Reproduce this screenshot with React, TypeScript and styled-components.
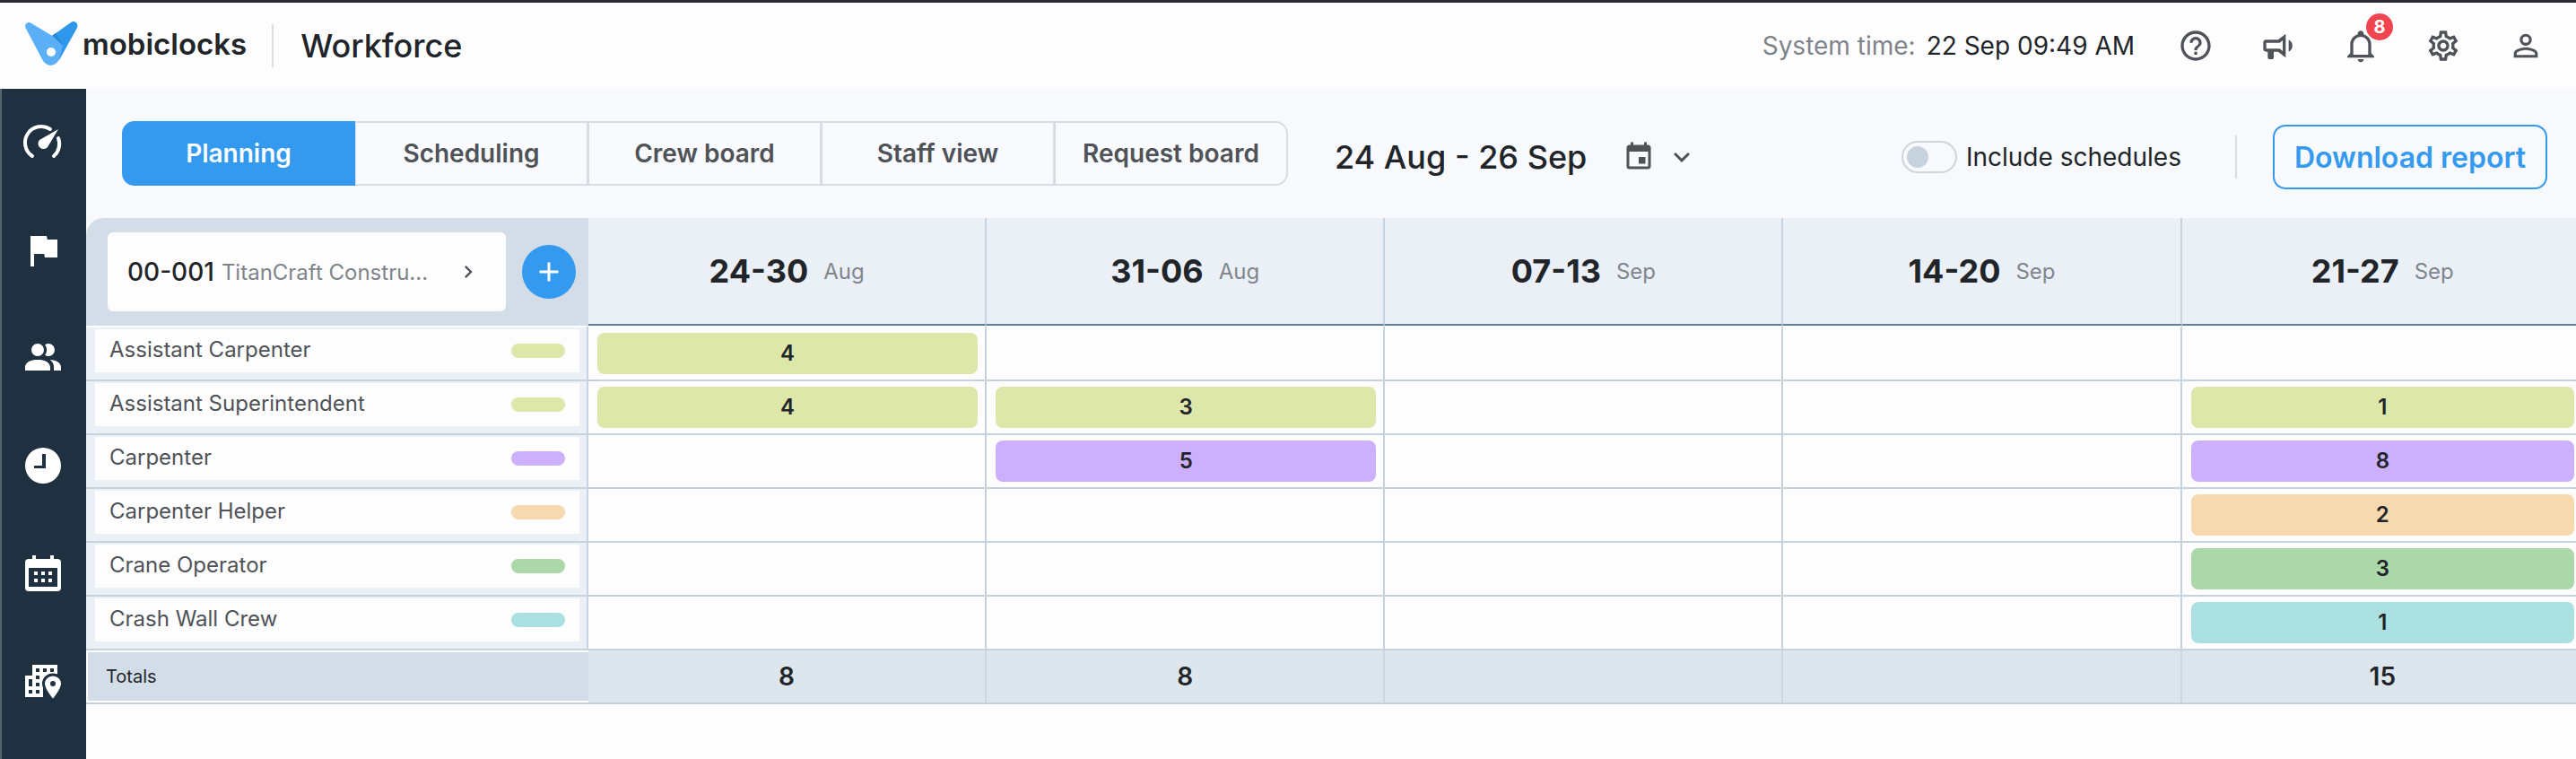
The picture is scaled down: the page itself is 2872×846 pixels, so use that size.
import React from 'react';
import styled, { createGlobalStyle } from 'styled-components';
import {
  MdAdd,
  MdChevronRight,
  MdEvent,
  MdExpandMore,
  MdFlag,
  MdHelpOutline,
  MdOutlineSettings,
  MdPersonOutline,
} from 'react-icons/md';

const colors = {
  ink: '#212529',
  text: '#4f5257',
  muted: '#7f848a',
  blue: '#339af0',
  line: '#c6d2de',
  surface: '#fdfdfe',
  toolbar: '#f7f9fc',
  navy: '#1f3040',
};

const GlobalStyle = createGlobalStyle`
  * { box-sizing: border-box; }
  body {
    margin: 0;
    background: ${colors.surface};
    color: ${colors.ink};
    font-family: Inter, "Liberation Sans", sans-serif;
  }
  button, input { font: inherit; color: inherit; }
  button { padding: 0; border: 0; background: none; cursor: pointer; }
  svg { display: block; flex: none; }
`;

const Page = styled.div`
  display: flex;
  flex-direction: column;
  min-height: 100vh;
  border-top: 3px solid #2a2a33;
`;

const TopBar = styled.header`
  display: flex;
  align-items: center;
  height: 96px;
  padding: 0 36px 0 28px;
  background: ${colors.surface};
`;

const Brand = styled.a`
  display: flex;
  align-items: center;
  gap: 2px;
  padding-bottom: 4px;
  color: ${colors.ink};
  font-size: 33px;
  font-weight: 600;
  line-height: 40px;
  text-decoration: none;
`;

const Divider = styled.span<{ $before: number; $after: number }>`
  width: 2px;
  height: 48px;
  margin: 0 ${(p) => p.$after}px 0 ${(p) => p.$before}px;
  background: #d9dee4;
`;

const PageTitle = styled.h1`
  margin: 0;
  font-size: 36px;
  font-weight: 500;
`;

const SystemTime = styled.p`
  display: flex;
  gap: 12px;
  margin: 0 48px 0 auto;
  font-size: 28px;
`;

const Muted = styled.span`
  color: ${colors.muted};
`;

const TopActions = styled.div`
  display: flex;
  gap: 52px;
`;

const IconButton = styled.button`
  position: relative;
  color: ${colors.text};
`;

const Badge = styled.span`
  position: absolute;
  top: -16px;
  right: -16px;
  width: 30px;
  height: 30px;
  border-radius: 50%;
  background: #f0444f;
  color: #fff;
  font-size: 20px;
  font-weight: 700;
  line-height: 30px;
  text-align: center;
`;

const Body = styled.div`
  display: flex;
  flex: 1;
`;

const Sidebar = styled.nav`
  display: flex;
  flex: none;
  flex-direction: column;
  align-items: center;
  gap: 72px;
  width: 96px;
  padding: 36px 2px 0 0;
  border-left: 2px solid #50666a;
  background: ${colors.navy};
`;

const SideLink = styled.a`
  color: #fff;
`;

const Main = styled.main`
  flex: 1;
  min-width: 0;
`;

const Toolbar = styled.div`
  display: flex;
  align-items: center;
  height: 144px;
  padding: 0 32px 0 40px;
  background: ${colors.toolbar};
`;

const Tabs = styled.div`
  display: flex;
  flex: none;
  height: 72px;
`;

const Tab = styled.button<{ $active?: boolean }>`
  width: 260px;
  border: 2px solid ${(p) => (p.$active ? colors.blue : '#d6dde4')};
  border-left-width: ${(p) => (p.$active ? 2 : 1)}px;
  background: ${(p) => (p.$active ? colors.blue : '#f8fafd')};
  color: ${(p) => (p.$active ? '#fff' : colors.text)};
  font-size: 28px;
  font-weight: 600;
  &:first-child { border-radius: 14px 0 0 14px; }
  &:last-child { border-radius: 0 14px 14px 0; }
`;

const ToolbarTools = styled.div`
  display: flex;
  flex: 1;
  align-items: center;
  padding: 8px 0 0 52px;
`;

const DateRange = styled.button`
  display: flex;
  align-items: center;
  gap: 12px;
  margin-right: auto;
  font-size: 36px;
  font-weight: 500;
  svg { color: ${colors.text}; }
`;

const DateText = styled.span`
  margin-right: 28px;
`;

const SwitchLabel = styled.label`
  display: flex;
  align-items: center;
  gap: 10px;
  font-size: 28px;
`;

const Switch = styled.input`
  appearance: none;
  width: 62px;
  height: 36px;
  margin: 0;
  padding: 4px;
  border: 2px solid #ced6dc;
  border-radius: 18px;
  background: ${colors.toolbar};
  &::before {
    display: block;
    width: 24px;
    height: 24px;
    border-radius: 50%;
    background: #c6d2dd;
    content: '';
  }
  &:checked { padding-left: 30px; }
`;

const OutlineButton = styled.button`
  height: 72px;
  padding: 0 22px;
  border: 2px solid ${colors.blue};
  border-radius: 14px;
  background: ${colors.toolbar};
  color: ${colors.blue};
  font-size: 32px;
  font-weight: 600;
`;

const BoardWrap = styled.div`
  background: ${colors.toolbar};
`;

const Board = styled.table`
  width: 100%;
  border-collapse: separate;
  border-spacing: 0;
  border-top-left-radius: 20px;
  overflow: hidden;
  background: ${colors.surface};
  table-layout: fixed;
  th, td { padding: 0; }
  thead th:last-child, tfoot td:last-child { padding-left: 8px; }
`;

const RoleCol = styled.col`
  width: 560px;
`;

const WeekCol = styled.col`
  width: 16%;
`;

const ProjectHead = styled.th`
  height: 120px;
  background: #d2dde7;
`;

const ProjectBar = styled.div`
  display: flex;
  align-items: center;
  justify-content: space-between;
  padding: 0 14px 0 24px;
`;

const ProjectPicker = styled.button`
  display: flex;
  align-items: center;
  width: 444px;
  height: 88px;
  padding: 0 28px 0 22px;
  border-radius: 6px;
  background: ${colors.surface};
  font-size: 28px;
  font-weight: 500;
  svg { margin-left: auto; color: ${colors.text}; }
`;

const ProjectName = styled.span`
  margin-left: 8px;
  color: ${colors.muted};
  font-size: 24px;
  font-weight: 400;
  white-space: nowrap;
`;

const AddButton = styled.button`
  display: flex;
  align-items: center;
  justify-content: center;
  width: 60px;
  height: 60px;
  border-radius: 50%;
  background: ${colors.blue};
  color: #fff;
`;

const WeekHead = styled.th`
  height: 120px;
  border-right: 2px solid ${colors.line};
  border-bottom: 2px solid #5f7f9e;
  background: #ebf0f6;
  &:last-child { border-right: 0; }
`;

const WeekLabel = styled.div`
  display: flex;
  align-items: center;
  justify-content: center;
  gap: 17px;
  font-size: 36px;
  font-weight: 700;
`;

const Month = styled.span`
  color: #80868d;
  font-size: 24px;
  font-weight: 400;
`;

const Row = styled.tr`
  height: 60px;
  th, td { border-top: 2px solid ${colors.line}; }
  &:first-child th, &:first-child td { border-top-color: ${colors.surface}; }
`;

const RoleCell = styled.th`
  border-right: 2px solid ${colors.line};
  background: #eaf0f5;
`;

const RoleCard = styled.div`
  display: flex;
  align-items: center;
  justify-content: space-between;
  height: 48px;
  margin: 2px 8px 8px 10px;
  padding: 0 16px;
  background: ${colors.surface};
  color: ${colors.text};
  font-size: 24px;
  font-weight: 400;
`;

const RoleName = styled.span`
  padding-bottom: 3px;
`;

const Swatch = styled.span<{ $color: string }>`
  width: 60px;
  height: 16px;
  border-radius: 8px;
  background: ${(p) => p.$color};
`;

const WeekCell = styled.td`
  border-right: 2px solid ${colors.line};
  &:last-child { border-right: 0; }
`;

const Bar = styled.div<{ $color: string; $last: boolean }>`
  height: 46px;
  margin: 0 ${(p) => (p.$last ? 2 : 8)}px 0 10px;
  border-radius: 8px;
  background: ${(p) => p.$color};
  font-size: 24px;
  font-weight: 600;
  line-height: 46px;
  text-align: center;
`;

const TotalsRow = styled.tr`
  th, td {
    height: 62px;
    border-top: 2px solid ${colors.line};
    border-bottom: 2px solid ${colors.line};
    background: #dee6ed;
  }
`;

const TotalsHead = styled.th`
  && { background: ${colors.surface}; }
`;

const TotalsLabel = styled.div`
  height: 54px;
  margin: 2px 0 2px 2px;
  padding-left: 20px;
  background: #d2dde7;
  font-size: 20px;
  font-weight: 400;
  line-height: 54px;
  text-align: left;
`;

const TotalCell = styled.td`
  border-right: 2px solid #ccd6e1;
  font-size: 28px;
  font-weight: 600;
  line-height: 36px;
  text-align: center;
  &:last-child { border-right: 0; }
`;

const Logo = () => (
  <svg width="62" height="50" viewBox="0 0 62 50" aria-hidden="true">
    <path d="M30 16 51 1c4-3 9 1 7 6L38 43 24 30z" fill="#2f97ea" />
    <path d="M30 16l4-3 8 14-2 4z" fill="#2687d8" />
    <path d="M7 2 32 17 42 27 38 42c-4 9-15 9-19 0L1 8C-2 3 3-1 7 2z" fill="#5aaff6" />
    <circle cx="29" cy="34" r="5" fill="#fff" />
  </svg>
);

const Gauge = () => (
  <svg width="48" height="48" viewBox="0 0 48 48" fill="none" aria-hidden="true">
    <path d="M12 39A18 18 0 0 1 32 9" stroke="currentColor" strokeWidth="4" strokeLinecap="round" />
    <path d="M41 19A18 18 0 0 1 36 39" stroke="currentColor" strokeWidth="4" strokeLinecap="round" />
    <path d="M41 9 29 29a6 6 0 1 1-9-8z" fill="currentColor" />
  </svg>
);

const People = () => (
  <svg width="48" height="48" viewBox="0 0 24 24" fill="currentColor" aria-hidden="true">
    <path d="M16 17v2H2v-2s0-4 7-4 7 4 7 4m-3.500-9.500A3.500 3.500 0 1 0 9 11a3.500 3.500 0 0 0 3.500-3.500m3.440 5.500A5.320 5.320 0 0 1 18 17v2h4v-2s0-3.630-6.060-4M15 4a3.390 3.390 0 0 0-1.930.590 5 5 0 0 1 0 5.820A3.390 3.390 0 0 0 15 11a3.500 3.500 0 0 0 0-7z" />
  </svg>
);

const Clock = () => (
  <svg width="48" height="48" viewBox="0 0 48 48" fill="currentColor" aria-hidden="true">
    <path fillRule="evenodd" d="M24 4a20 20 0 1 0 0 40 20 20 0 0 0 0-40zM27 27H14v-3h9V11h4z" />
  </svg>
);

const CalendarMonth = () => (
  <svg width="48" height="48" viewBox="0 0 48 48" fill="currentColor" aria-hidden="true">
    <path
      fillRule="evenodd"
      d="M12 4h4v4h16V4h4v4h4a4 4 0 0 1 4 4v28a4 4 0 0 1-4 4H8a4 4 0 0 1-4-4V12a4 4 0 0 1 4-4h4zM8 18v21h32V18z"
    />
    <path d="M14 22h4v4h-4zM22 22h4v4h-4zM30 22h4v4h-4zM14 30h4v4h-4zM22 30h4v4h-4zM30 30h4v4h-4z" />
  </svg>
);

const Sites = () => (
  <svg width="48" height="48" viewBox="0 0 48 48" fill="currentColor" aria-hidden="true">
    <path
      fillRule="evenodd"
      d="M12 6h28v20H24v16H4V18h8zM16 10v4h4v-4zM24 10v4h4v-4zM32 10v4h4v-4zM16 18v4h4v-4zM16 26v4h4v-4zM16 34v4h4v-4zM8 22v8h4v-8zM8 34v4h4v-4z"
    />
    <path
      d="M35 17c-6 0-10.500 4.500-10.500 10 0 7 10.500 19 10.500 19s10.500-12 10.500-19c0-5.500-4.500-10-10.500-10z"
      stroke={colors.navy}
      strokeWidth="3"
    />
    <circle cx="35" cy="27" r="3" fill={colors.navy} />
  </svg>
);

const Megaphone = () => (
  <svg width="40" height="40" viewBox="0 0 24 24" fill="currentColor" aria-hidden="true">
    <path d="M12 8H4a2 2 0 0 0-2 2v4a2 2 0 0 0 2 2h1v4a1 1 0 0 0 1 1h2a1 1 0 0 0 1-1v-4h3l5 4V4l-5 4m3 7.600L13 14H4v-4h9l2-1.600v7.200m6.500-3.600c0 1.710-.960 3.260-2.500 4V8c1.530.750 2.500 2.300 2.500 4z" />
  </svg>
);

const Bell = () => (
  <svg width="40" height="40" viewBox="0 0 24 24" fill="currentColor" aria-hidden="true">
    <path d="M10 21h4c0 1.100-.900 2-2 2s-2-.900-2-2m11-2v1H3v-1l2-2v-6c0-3.100 2-5.800 5-6.700V4c0-1.100.900-2 2-2s2 .900 2 2v.300c3 .900 5 3.600 5 6.700v6l2 2m-4-8c0-2.800-2.200-5-5-5s-5 2.200-5 5v7h10v-7z" />
  </svg>
);

const sideItems = [
  { label: 'Dashboard', icon: <Gauge /> },
  { label: 'Projects', icon: <MdFlag size={48} /> },
  { label: 'People', icon: <People /> },
  { label: 'Time', icon: <Clock /> },
  { label: 'Calendar', icon: <CalendarMonth /> },
  { label: 'Sites', icon: <Sites /> },
];

const tabs = ['Planning', 'Scheduling', 'Crew board', 'Staff view', 'Request board'];

const weeks = [
  { range: '24-30', month: 'Aug', total: 8 },
  { range: '31-06', month: 'Aug', total: 8 },
  { range: '07-13', month: 'Sep', total: null },
  { range: '14-20', month: 'Sep', total: null },
  { range: '21-27', month: 'Sep', total: 15 },
];

const roles: { name: string; color: string; counts: (number | null)[] }[] = [
  { name: 'Assistant Carpenter', color: '#dde7a9', counts: [4, null, null, null, null] },
  { name: 'Assistant Superintendent', color: '#dde7a9', counts: [4, 3, null, null, 1] },
  { name: 'Carpenter', color: '#ccb0fb', counts: [null, 5, null, null, 8] },
  { name: 'Carpenter Helper', color: '#f6d9ae', counts: [null, null, null, null, 2] },
  { name: 'Crane Operator', color: '#abd7ab', counts: [null, null, null, null, 3] },
  { name: 'Crash Wall Crew', color: '#abe0e0', counts: [null, null, null, null, 1] },
];

export default function App() {
  return (
    <Page>
      <GlobalStyle />
      <TopBar>
        <Brand href="#">
          <Logo />
          <span>mobiclocks</span>
        </Brand>
        <Divider $before={28} $after={30} />
        <PageTitle>Workforce</PageTitle>
        <SystemTime>
          <Muted>System time:</Muted>
          <time>22 Sep 09:49 AM</time>
        </SystemTime>
        <TopActions>
          <IconButton aria-label="Help"><MdHelpOutline size={40} /></IconButton>
          <IconButton aria-label="Announcements"><Megaphone /></IconButton>
          <IconButton aria-label="Notifications">
            <Bell />
            <Badge>8</Badge>
          </IconButton>
          <IconButton aria-label="Settings"><MdOutlineSettings size={40} /></IconButton>
          <IconButton aria-label="Account"><MdPersonOutline size={40} /></IconButton>
        </TopActions>
      </TopBar>
      <Body>
        <Sidebar>
          {sideItems.map((item) => (
            <SideLink key={item.label} href="#" aria-label={item.label}>{item.icon}</SideLink>
          ))}
        </Sidebar>
        <Main>
          <Toolbar>
            <Tabs role="tablist">
              {tabs.map((tab, i) => (
                <Tab key={tab} role="tab" aria-selected={i === 0} $active={i === 0}>{tab}</Tab>
              ))}
            </Tabs>
            <ToolbarTools>
              <DateRange>
                <DateText>24 Aug - 26 Sep</DateText>
                <MdEvent size={36} />
                <MdExpandMore size={36} />
              </DateRange>
              <SwitchLabel>
                <Switch type="checkbox" role="switch" />
                Include schedules
              </SwitchLabel>
              <Divider $before={60} $after={40} />
              <OutlineButton>Download report</OutlineButton>
            </ToolbarTools>
          </Toolbar>
          <BoardWrap>
            <Board>
              <colgroup>
                <RoleCol />
                {weeks.slice(1).map((week) => <WeekCol key={week.range} />)}
                <col />
              </colgroup>
              <thead>
                <tr>
                  <ProjectHead>
                    <ProjectBar>
                      <ProjectPicker>
                        00-001
                        <ProjectName>TitanCraft Constru...</ProjectName>
                        <MdChevronRight size={28} />
                      </ProjectPicker>
                      <AddButton aria-label="Add role"><MdAdd size={36} /></AddButton>
                    </ProjectBar>
                  </ProjectHead>
                  {weeks.map((week) => (
                    <WeekHead key={week.range} scope="col">
                      <WeekLabel>
                        {week.range}
                        <Month>{week.month}</Month>
                      </WeekLabel>
                    </WeekHead>
                  ))}
                </tr>
              </thead>
              <tbody>
                {roles.map((role) => (
                  <Row key={role.name}>
                    <RoleCell scope="row">
                      <RoleCard>
                        <RoleName>{role.name}</RoleName>
                        <Swatch $color={role.color} />
                      </RoleCard>
                    </RoleCell>
                    {role.counts.map((count, i) => (
                      <WeekCell key={weeks[i].range}>
                        {count !== null && (
                          <Bar $color={role.color} $last={i === weeks.length - 1}>{count}</Bar>
                        )}
                      </WeekCell>
                    ))}
                  </Row>
                ))}
              </tbody>
              <tfoot>
                <TotalsRow>
                  <TotalsHead scope="row">
                    <TotalsLabel>Totals</TotalsLabel>
                  </TotalsHead>
                  {weeks.map((week) => (
                    <TotalCell key={week.range}>{week.total}</TotalCell>
                  ))}
                </TotalsRow>
              </tfoot>
            </Board>
          </BoardWrap>
        </Main>
      </Body>
    </Page>
  );
}
